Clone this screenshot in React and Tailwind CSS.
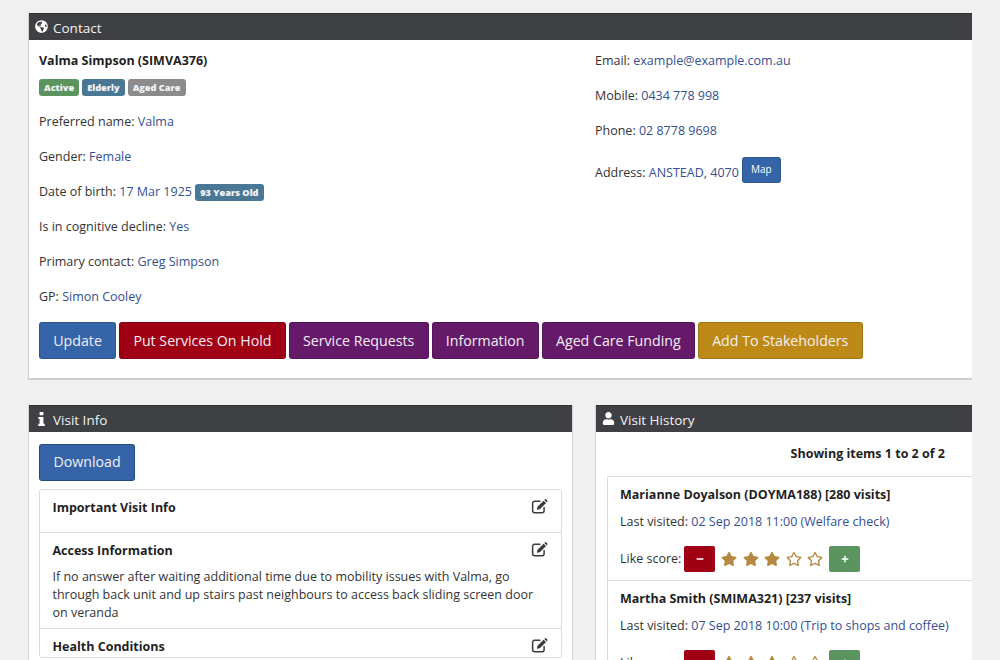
import React from "react";
import { FaGlobeAmericas, FaUser, FaStar, FaRegStar, FaMinus, FaPlus } from "react-icons/fa";

const Link = ({ children }) => <span className="text-[#34508f]">{children}</span>;

const Field = ({ label, value, children }) => (
  <div className="h-[35px] leading-[20px]">
    {label}: <Link>{value}</Link>
    {children}
  </div>
);

const Badge = ({ color, children }) => (
  <span className={`inline-block h-[17px] rounded-[3px] px-[5px] text-[9.2px] font-extrabold leading-[17px] text-[#f4f4f4] ${color}`}>
    {children}
  </span>
);

const Btn = ({ color, children }) => (
  <button className={`h-[37px] rounded-[3px] border border-black/15 px-[13.25px] text-[14.2px] text-[#f3eef3] ${color}`}>
    {children}
  </button>
);

const InfoGlyph = () => (
  <svg viewBox="0 0 10 16" className="h-[14px] w-[9px]" fill="currentColor" aria-hidden="true">
    <rect x="2.8" y="0" width="4.4" height="3.6" rx="0.8" />
    <path d="M1.5 5.6h5.7v7.9h1.5V16H1.3v-2.5h1.5V8.1H1.5z" />
  </svg>
);

const EditGlyph = () => (
  <svg viewBox="0 0 18 17" className="absolute right-[13px] top-[9px] h-[15px] w-[17px] text-[#3a3a3a]" aria-hidden="true">
    <path d="M9.5 2.5H3.5A2.3 2.3 0 0 0 1.2 4.8v8.4a2.3 2.3 0 0 0 2.3 2.3h8.4a2.3 2.3 0 0 0 2.3-2.3V9.5" fill="none" stroke="currentColor" strokeWidth="1.7" strokeLinecap="round" />
    <path d="M6 12.2l.7-3.3 7-7 2.7 2.7-7 7zM14.5 1.1l.7-.7a.9.9 0 0 1 1.2 0l1.4 1.4a.9.9 0 0 1 0 1.2l-.7.7z" fill="currentColor" />
  </svg>
);

const Header = ({ icon, title }) => (
  <div className="flex h-[27px] items-center gap-[5px] border-t border-[#2f3034] bg-[#3f4044] pl-[6px] pt-[2px] text-[13.5px] text-[#f2f2f2]">
    <span className="mt-[-3px] flex w-[13px] justify-center text-[13px] text-white">{icon}</span>
    {title}
  </div>
);

const Row = ({ title, children, last, height }) => (
  <div className={`relative px-[12.5px] pt-[8px] ${height} ${last ? "" : "border-b border-[#dddddd]"}`}>
    <div className="text-[12.5px] font-bold leading-[20px] text-[#1f1f1f]">{title}</div>
    <EditGlyph />
    {children}
  </div>
);

const Stars = () => (
  <div className="flex items-center gap-[5.5px] text-[16px] text-[#b5893f]">
    <FaStar /><FaStar /><FaStar />
    <FaRegStar /><FaRegStar />
  </div>
);

const Score = () => (
  <div className="flex h-[26px] items-center">
    <span className="mr-[3px]">Like score:</span>
    <span className="flex h-[26px] w-[31px] items-center justify-center rounded-[2px] bg-[#a00014] text-[8px] text-white"><FaMinus /></span>
    <span className="mx-[6px]"><Stars /></span>
    <span className="flex h-[26px] w-[31px] items-center justify-center rounded-[2px] bg-[#5c9460] text-[8px] text-white"><FaPlus /></span>
  </div>
);

const Visit = ({ name, last }) => (
  <div className="border-b border-[#dddddd] pl-[12px]">
    <div className="pt-[8px] text-[12.5px] font-bold leading-[20px] text-[#1f1f1f]">{name}</div>
    <div className="mt-[7px] leading-[20px]">Last visited: <Link>{last}</Link></div>
    <div className="mt-[14px] pb-[8px]"><Score /></div>
  </div>
);

export default function App() {
  return (
    <div className="h-[660px] overflow-hidden bg-[#f0f0f0] px-[28px] pt-[13px] text-[12.5px] text-[#333333] [font-family:'Open_Sans',sans-serif]">
      <section className="h-[367px] border-b-2 border-l border-[#cfcfcf] bg-white">
        <Header icon={<FaGlobeAmericas />} title="Contact" />
        <div className="flex pt-[11px]">
          <div className="w-[566px] pl-[10px]">
            <div className="text-[12.5px] font-bold leading-[20px] text-[#1f1f1f]">Valma Simpson (SIMVA376)</div>
            <div className="mt-[8px] flex h-[17px] gap-[3px]">
              <Badge color="bg-[#5c9460]">Active</Badge>
              <Badge color="bg-[#4a7894]">Elderly</Badge>
              <Badge color="bg-[#8b8b8b]">Aged Care</Badge>
            </div>
            <div className="mt-[16px]">
              <Field label="Preferred name" value="Valma" />
              <Field label="Gender" value="Female" />
              <Field label="Date of birth" value="17 Mar 1925">
                {" "}<Badge color="bg-[#4a7894]">93 Years Old</Badge>
              </Field>
              <Field label="Is in cognitive decline" value="Yes" />
              <Field label="Primary contact" value="Greg Simpson" />
              <Field label="GP" value="Simon Cooley" />
            </div>
            <div className="flex w-[900px] gap-[3px]">
              <Btn color="bg-[#3565a8]">Update</Btn>
              <Btn color="bg-[#a00014]">Put Services On Hold</Btn>
              <Btn color="bg-[#641a69]">Service Requests</Btn>
              <Btn color="bg-[#641a69]">Information</Btn>
              <Btn color="bg-[#641a69]">Aged Care Funding</Btn>
              <Btn color="bg-[#bd8a17]">Add To Stakeholders</Btn>
            </div>
          </div>
          <div>
            <Field label="Email" value="example@example.com.au" />
            <Field label="Mobile" value="0434 778 998" />
            <Field label="Phone" value="02 8778 9698" />
            <div className="flex items-start leading-[20px]">
              <span className="mt-[7px]">Address: <Link>ANSTEAD, 4070</Link></span>
              <span className="ml-[3px] mt-[1px] flex h-[26px] w-[39px] items-center justify-center rounded-[3px] border border-black/15 bg-[#3565a8] pb-[2px] text-[10px] text-white">Map</span>
            </div>
          </div>
        </div>
      </section>

      <div className="mt-[25px] flex gap-[22px]">
        <section className="h-[300px] w-[545px] border-x border-[#d4d4d4] bg-white">
          <Header icon={<InfoGlyph />} title="Visit Info" />
          <div className="px-[10px] pt-[12px]">
            <button className="h-[37px] w-[96px] rounded-[3px] border border-black/25 bg-[#3565a8] pb-[1px] text-[14.2px] text-[#f3eef3]">Download</button>
            <div className="mt-[8px] rounded-[3px] border border-[#dddddd]">
              <Row title="Important Visit Info" height="h-[43px]" />
              <Row title="Access Information" height="h-[96px]">
                <p className="mt-[7px] leading-[18px]">If no answer after waiting additional time due to mobility issues with Valma, go through back unit and up stairs past neighbours to access back sliding screen door on veranda</p>
              </Row>
              <Row title="Health Conditions" last />
            </div>
          </div>
        </section>
        <section className="h-[300px] flex-1 border-l border-[#d4d4d4] bg-white">
          <Header icon={<FaUser />} title="Visit History" />
          <div className="pl-[11px] pt-[12px]">
            <div className="pr-[27px] text-right text-[12.5px] font-bold leading-[20px] text-[#1f1f1f]">Showing items 1 to 2 of 2</div>
            <div className="mt-[12px] rounded-tl-[3px] border-l border-t border-[#dddddd]">
              <Visit name="Marianne Doyalson (DOYMA188) [280 visits]" last="02 Sep 2018 11:00 (Welfare check)" />
              <Visit name="Martha Smith (SMIMA321) [237 visits]" last="07 Sep 2018 10:00 (Trip to shops and coffee)" />
            </div>
          </div>
        </section>
      </div>
    </div>
  );
}
